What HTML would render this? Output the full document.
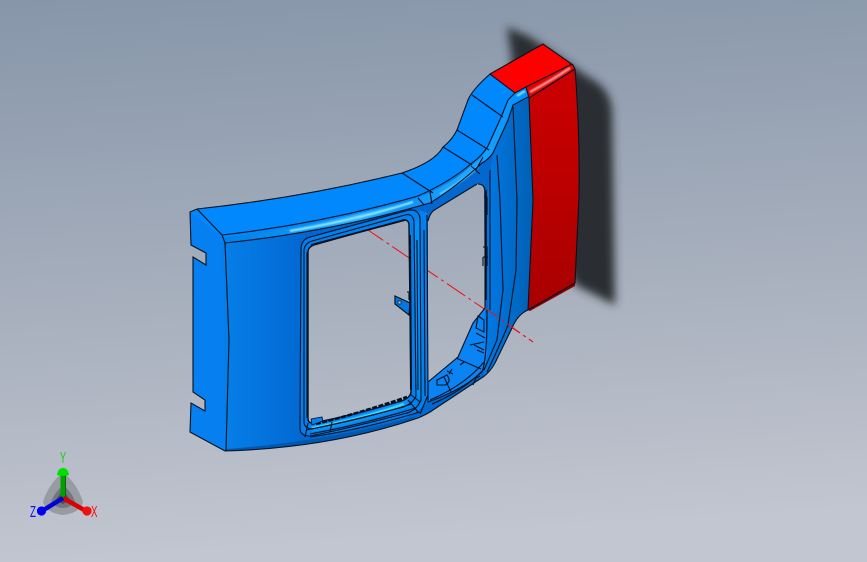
<!DOCTYPE html>
<html><head><meta charset="utf-8"><style>
html,body{margin:0;padding:0;width:867px;height:562px;overflow:hidden;background:#a4adba}
svg{display:block;position:absolute;left:0;top:0}
text{font-family:"Liberation Sans",sans-serif;font-size:16px}
</style></head><body>
<svg width="867" height="562" viewBox="0 0 867 562" xmlns="http://www.w3.org/2000/svg">
<defs>
<linearGradient id="bg" x1="0" y1="0" x2="0.1" y2="1"><stop offset="0" stop-color="#8796aa"/><stop offset="0.5" stop-color="#a4adbb"/><stop offset="1" stop-color="#c2c6d0"/></linearGradient>
<linearGradient id="front" x1="225" y1="0" x2="305" y2="0" gradientUnits="userSpaceOnUse"><stop offset="0" stop-color="#067ee8"/><stop offset="1" stop-color="#0268d0"/></linearGradient>
<linearGradient id="strip" x1="487" y1="0" x2="532" y2="0" gradientUnits="userSpaceOnUse"><stop offset="0" stop-color="#0278e4"/><stop offset="1" stop-color="#0060b4"/></linearGradient>
<linearGradient id="red" x1="0" y1="98" x2="0" y2="310" gradientUnits="userSpaceOnUse"><stop offset="0" stop-color="#c80000"/><stop offset="1" stop-color="#a80000"/></linearGradient>
<linearGradient id="hl" x1="225" y1="0" x2="525" y2="0" gradientUnits="userSpaceOnUse"><stop offset="0" stop-color="#0080ec"/><stop offset="0.3" stop-color="#1098f8"/><stop offset="0.45" stop-color="#28b0ff"/><stop offset="0.6" stop-color="#0c90f8"/><stop offset="0.8" stop-color="#20a8ff"/><stop offset="1" stop-color="#0090ff"/></linearGradient>
<linearGradient id="redband" x1="526" y1="92" x2="532" y2="100" gradientUnits="userSpaceOnUse"><stop offset="0" stop-color="#e80000"/><stop offset="0.5" stop-color="#ff9090"/><stop offset="1" stop-color="#d80000"/></linearGradient>
<filter id="blur" x="-20%" y="-20%" width="140%" height="140%"><feGaussianBlur stdDeviation="4.5"/></filter>
<filter id="b2"><feGaussianBlur stdDeviation="0.8"/></filter>
<filter id="b3"><feGaussianBlur stdDeviation="0.4"/></filter>
</defs>
<rect width="867" height="562" fill="url(#bg)"/>

<!-- shadow -->
<path d="M507,27 L530,37 L590,78 Q610,88 612,110 L615,305 L575,285 L500,120 L512,60 Z" fill="#2b2e33" filter="url(#blur)"/>

<!-- red axis line behind -->
<path d="M365,228 L533,342" stroke="#f01010" stroke-width="1" stroke-dasharray="22 4 3 4" fill="none"/>

<!-- main body -->
<path fill-rule="evenodd" fill="url(#front)" d="M190,212 L197,209 Q300,198 402,173 Q435,162 443,147 Q452,140 457,130 L468,100 Q472,90 490,74 L530,90 L533,200 L528,310 Q518,314 512,328 L495,363 Q490,372 483,377 L430,412 Q425,415 418,418 Q330,448 225,451 L190,432 L191,403 L205,411 L205,400 L193,392 L193,257 L206,265 L206,253 L191,245 Z
M308,252 Q308,247 314,245 L403,220 Q409,219 409,226 L411,392 Q410,399 398,402 Q350,416 312,423 Q308,423 308,418 Z
M428,221 Q430,212 436,209 L477,184 Q483,183 484,190 L485,308 L473,323 L458,357 L428,382 Z"/>

<!-- side tab panel -->
<path d="M190,212 L223,238 L225,450 L190,432 L191,403 L205,411 L205,400 L193,392 L193,257 L206,265 L206,253 L191,245 Z" fill="#0680f0"/>

<!-- window surround tint -->
<path fill-rule="evenodd" fill="#0480ee" d="M301,248 Q302,241 310,238 L405,212 Q420,208 428,214 L428,400 Q420,412 405,418 Q350,432 308,437 Q300,435 300,428 Z M308,252 Q308,247 314,245 L403,220 Q409,219 409,226 L411,392 Q410,399 398,402 Q350,416 312,423 Q308,423 308,418 Z"/>
<path d="M414,222 L420,218 L421,398 L416,396 Z" fill="#0090fa"/>

<!-- inner lower surface of window 2 -->
<path d="M485,308 L473,323 L458,357 L428,382 L428,402 L440,398 Q470,385 483,372 L488,355 Z" fill="#0a84f4"/>

<!-- right strip -->
<path d="M493,153 L508,120 L513,107 L529,98 L533,200 L528,310 Q518,314 512,328 L495,363 Q490,372 483,377 L488,350 L487,200 Z" fill="url(#strip)"/>

<!-- top face -->
<path d="M190,212 L197,209 Q300,198 402,173 Q435,162 443,147 Q452,140 457,130 L468,100 Q472,90 490,74 L515,93 L508,100 L502,117 L488,148 Q482,158 472,165 Q455,178 433,193 L418,198 Q320,226 223,238 Z" fill="#0088fc"/>

<!-- highlight band -->
<path d="M223,238 Q320,226 418,198 Q450,185 472,165 Q482,158 488,148 L502,117 L508,100 L515,93 L526,87 L529,97 L513,105 L508,120 L493,153 Q488,160 482,163 Q455,188 430,203 Q330,232 226,243 Z" fill="url(#hl)"/>
<path d="M290,231 Q360,219 413,202" stroke="#90e8ff" stroke-width="2.2" fill="none" filter="url(#b2)"/>
<path d="M440,194 Q465,180 478,167" stroke="#60d8ff" stroke-width="1.6" fill="none" filter="url(#b2)"/>
<path d="M517,96 L525,91" stroke="#70d8ff" stroke-width="2.4" fill="none" filter="url(#b3)"/>

<!-- lower window highlight -->
<path d="M310,425 Q360,418 408,398 L413,406 Q360,424 312,432 Z" fill="#0890f8"/>
<path d="M312,428 Q365,418 404,404" stroke="#40e0ff" stroke-width="2.4" fill="none" filter="url(#b3)"/>

<!-- bottom sliver -->
<path d="M225,451 Q330,448 418,418 L413,417 Q330,441 227,449 Z" fill="#0058b0"/>

<!-- red -->
<path d="M490,74 L543,44 L573,65 L526,87 L515,93 Z" fill="#ff0000"/>
<path d="M526,87 L572,64 L575,69 L529,98 Z" fill="#e00404"/>
<path d="M530,92 Q552,80 570,68" stroke="#ff9c9c" stroke-width="2.4" fill="none" filter="url(#b2)"/>
<path d="M529,98 L575,69 Q580,130 579,197 L575,283 L528,310 L533,200 Z" fill="url(#red)"/>
<path d="M528,310 L575,283 L575,286 L530,311 Z" fill="#8a0000"/>

<!-- black edges -->
<g fill="none" stroke="#06121f" stroke-width="1.1">
<path d="M190,212 L197,209 Q300,198 402,173 Q435,162 443,147 Q452,140 457,130 L468,100 Q472,90 490,74 L543,44 L573,65 L575,69 Q580,130 579,197 L575,283 L528,310 Q518,314 512,328 L495,363 Q490,372 483,377 L430,412 Q425,415 418,418 Q330,448 225,451 L190,432 L191,403 L205,411 L205,400 L193,392 L193,257 L206,265 L206,253 L191,245 Z"/>
<path d="M490,74 L515,93 L526,87 L572,64"/>
<path d="M526,87 L529,98 L575,69"/>
<path d="M197,209 L222,235 Q320,224 418,196 Q450,182 472,163 Q482,156 488,146 L502,115 L508,100 L515,93"/>
<path d="M225,243 Q330,232 430,203 Q456,187 482,163 Q488,160 493,153 L508,120 L513,105 L528,97"/>
<path d="M222,235 L225,243 L229,340 L226,451"/>
<path d="M529,98 L533,200 L528,310"/>
<path d="M513,107 L517,200 L516,270 L508,325 Q500,345 487,372"/>
<path d="M497,155 L500,200 L503,290 L497,340 L484,370"/>
<path d="M490,170 L490,310"/>
<path d="M472,95 L503,117 M457,130 L489,150 M443,147 L472,165 M402,173 L433,193"/>
<path d="M418,198 L424,205 M430,192 L432,204"/>
<path d="M471,166 L480,174 M483,157 L476,170"/>

<!-- left window outlines -->
<path d="M308,252 Q308,247 314,245 L403,220 Q409,219 409,226 L411,392 Q410,399 398,402 Q350,416 312,423 Q308,423 308,418 Z" stroke-width="1.4"/>
<path d="M304,250 Q305,243 312,241 L405,215 Q413,213 414,222 L416,396 Q412,405 400,408 Q350,421 312,429 Q304,428 304,422 Z"/>
<path d="M301,248 Q302,239 310,237 L405,211 Q418,207 420,218 L421,400 Q416,412 403,414 Q350,428 310,436 Q300,436 300,428 Z"/>
<path d="M427,215 L428,395 L420,414"/>
<path d="M417,240 L418,390 M424,230 L425,396"/>
<path d="M310,437 Q360,430 420,412 M305,437 L308,423 M330,432 L332,422"/>
<path d="M306,430 Q360,420 412,404 M310,434 Q360,425 416,408"/>
<path d="M410,394 L420,402 M408,400 L418,412"/>

<!-- right window outlines -->
<path d="M428,221 Q430,212 436,209 L477,184 M428,382 L458,357 L473,323 L485,308 L485,190 Q484,184 478,184"/>
<path d="M428,382 L428,402 Q462,390 482,372 Q487,360 487,310"/>
<path d="M430,400 Q465,385 484,362 M432,404 Q465,390 485,368"/>
<path d="M456,358 L481,369 M444,377 L451,392 M476,333 L485,338 M474,345 L484,350 M437,380 L447,375 Q452,382 445,385 L437,385 Z"/>
<path d="M478,316 L484,320 L484,332 L476,328 Z M470,345 L484,342 M477,350 L484,353 M473,385 L476,378 L480,376"/>
<path d="M447,371 L453,374 M449,374 L452,369 M460,365 L464,362"/>

<!-- bracket -->
<path d="M395,296 L410,303 L409,315 L395,304 Z" fill="#0478e0" stroke-width="1.2"/>
<rect x="398" y="301" width="3" height="3" fill="#a8b0bc" stroke-width="0.6"/>
<path d="M407,292 L409,292 L409,300"/>
<path d="M484,197 L487,197 L487,215 M483,247 L487,247 L487,266 M483,257 L488,257 M483,257 L483,266"/>
</g>

<!-- dark toothed band in windows -->
<path d="M316,424 Q360,413 407,397" stroke="#021020" stroke-width="2.6" stroke-dasharray="5 1.5" fill="none"/>
<path d="M311,419 L322,417 L323,421 L312,425 Z" fill="#0880f0" stroke="#021020" stroke-width="0.8"/>
<path d="M410,235 L411,390" stroke="#021020" stroke-width="2" fill="none"/>
<path d="M486,190 L486,300" stroke="#021020" stroke-width="1.6" fill="none"/>
<path d="M311,245 L405,220" stroke="#021020" stroke-width="1.8" fill="none"/>
<path d="M307,252 L307,418" stroke="#021020" stroke-width="1" fill="none"/>

<!-- red axis on top -->
<path d="M485,308 L533,342" stroke="#f01010" stroke-width="1" stroke-dasharray="16 4 3 4" fill="none"/>

<!-- triad -->
<g>
<path d="M63,472 Q78,485 83,502 Q80,513 63,515 Q46,513 43,502 Q48,485 63,472 Z" fill="#8b8f96" fill-opacity="0.75"/>
<path d="M63,485 Q72,492 75,502 Q70,508 63,508 Q56,508 51,502 Q55,492 63,485 Z" fill="#6c7076" fill-opacity="0.85"/>
<path d="M63,490 L70,500 L63,504 L56,500 Z" fill="#4a4d52"/>
<path d="M63,498 L63,474" stroke="#00a000" stroke-width="5"/>
<path d="M65.5,498 L65.5,474" stroke="#007000" stroke-width="1"/>
<path d="M57,475 Q58,468 63,468 Q68,468 69,475 Q63,477 57,475 Z" fill="#00e000"/>
<path d="M63,498 L86,511" stroke="#d80000" stroke-width="4.5"/>
<circle cx="87" cy="511" r="4.6" fill="#f01010"/>
<path d="M63,498 L42,511" stroke="#0000d8" stroke-width="4.5"/>
<circle cx="41.5" cy="511" r="4.6" fill="#0000f0"/>
<text x="60" y="463" fill="#10d010" textLength="6" lengthAdjust="spacingAndGlyphs">Y</text>
<text x="91" y="517" fill="#f01010" textLength="6.5" lengthAdjust="spacingAndGlyphs">X</text>
<text x="30" y="517" fill="#1010f0" textLength="6" lengthAdjust="spacingAndGlyphs">Z</text>
</g>
</svg>
</body></html>
